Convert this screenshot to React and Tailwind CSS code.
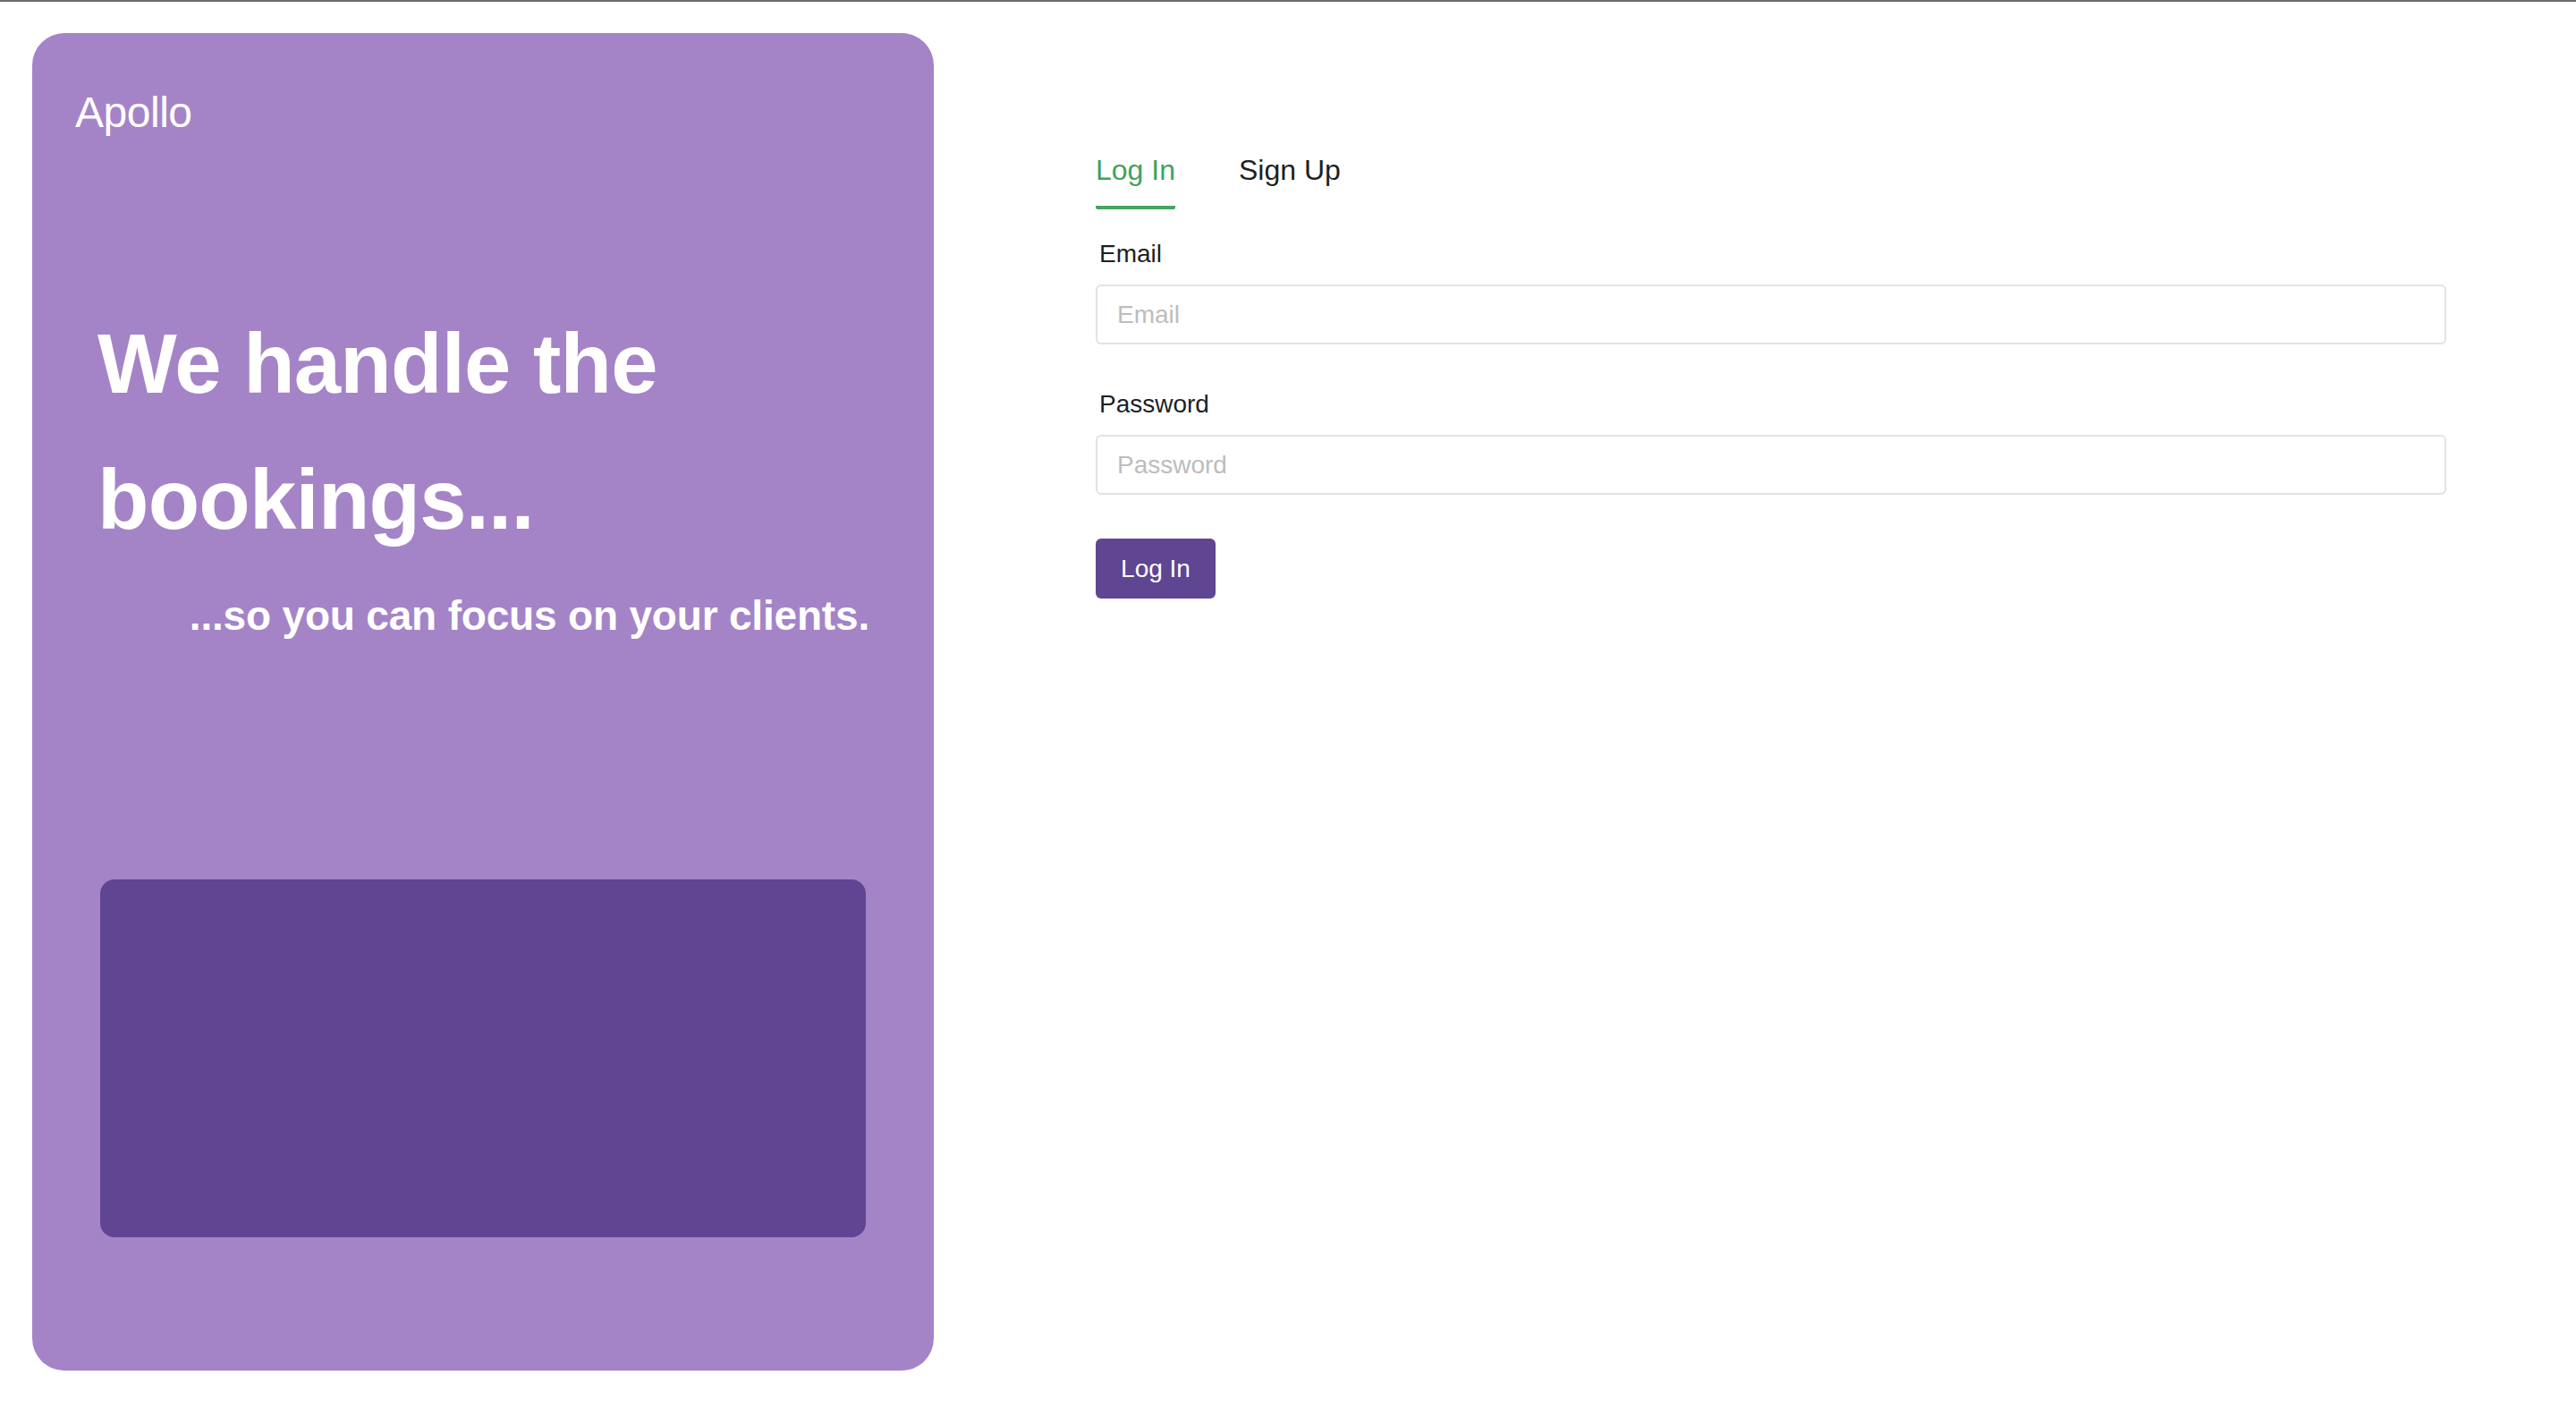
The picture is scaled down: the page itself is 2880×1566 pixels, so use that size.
import React from 'react';

const App = () => {
  return (
    <div className="min-h-screen bg-white font-['Liberation_Sans',Arial,sans-serif]">
      {/* thin top rule */}
      <div className="h-[2px] bg-[#6b6b6b]"></div>

      <div className="flex pt-[35px] pl-[36px] pr-[145px]">
        {/* Left promo card */}
        <div className="w-[1008px] h-[1495px] shrink-0 rounded-[36px] bg-[#a484c7] flex flex-col">
          <div className="pl-[48px] pt-[61px] text-white text-[48px] leading-[56px] tracking-[-0.01em]">Apollo</div>

          <h1 className="mt-[177px] pl-[73px] text-white font-bold text-[94px] leading-[152px] tracking-[-0.008em]">
            We handle the
            <br />
            bookings...
          </h1>

          <p className="mt-[25px] pr-[72px] text-right text-white font-bold text-[46px] leading-[56px] tracking-[-0.004em]">
            ...so you can focus on your clients.
          </p>

          <div className="mt-[267px] mx-[76px] h-[400px] rounded-[16px] bg-[#5f4592]"></div>
        </div>

        {/* Right form */}
        <div className="flex-1 ml-[181px] pt-[133px]">
          <div className="flex gap-[71px] text-[32px] leading-[40px]">
            <button className="pb-[20px] border-b-4 border-[#4aa35f] text-[#43a15a] rounded-b-[2px]">Log In</button>
            <button className="pb-[20px] border-b-4 border-transparent text-[#1f1f1f]">Sign Up</button>
          </div>

          <form className="flex flex-col" onSubmit={(e) => e.preventDefault()}>
            <label className="mt-[32px] pl-[4px] text-[28px] leading-[36px] text-[#1f1f1f]">Email</label>
            <input
              type="email"
              placeholder="Email"
              className="mt-[16px] h-[67px] w-full rounded-[6px] border-2 border-[#e2e2e6] px-[22px] text-[28px] text-[#1f1f1f] placeholder:text-[#bdbdbd] outline-none"
            />

            <label className="mt-[49px] pl-[4px] text-[28px] leading-[36px] text-[#1f1f1f]">Password</label>
            <input
              type="password"
              placeholder="Password"
              className="mt-[16px] h-[67px] w-full rounded-[6px] border-2 border-[#e2e2e6] px-[22px] text-[28px] text-[#1f1f1f] placeholder:text-[#bdbdbd] outline-none"
            />

            <div className="mt-[49px]">
              <button type="submit" className="h-[67px] w-[134px] rounded-[6px] bg-[#5f4592] text-white text-[28px]">
                Log In
              </button>
            </div>
          </form>
        </div>
      </div>
    </div>
  );
};

export default App;
